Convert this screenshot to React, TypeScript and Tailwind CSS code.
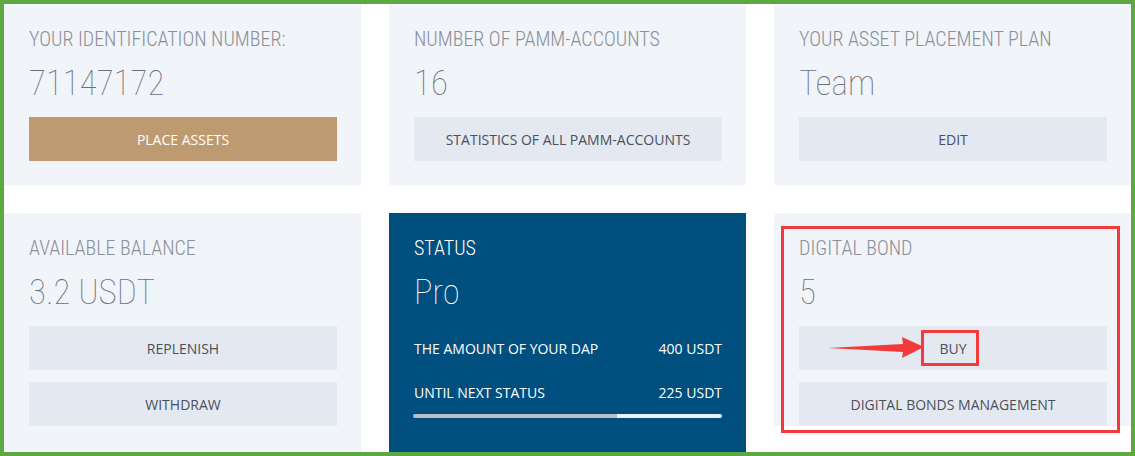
const head = { fontFamily: '"Roboto Condensed", Roboto, sans-serif' }
const body = { fontFamily: '"Open Sans", "Liberation Sans", sans-serif' }

const Btn = ({ children, gold }: { children: React.ReactNode; gold?: boolean }) => (
  <div
    style={body}
    className={
      gold
        ? 'h-11 w-full flex items-center justify-center bg-[#be9a70] text-white text-[14px] uppercase'
        : 'h-11 w-full flex items-center justify-center bg-[#e4e8f0] text-[#4b505b] text-[14px] uppercase'
    }
  >
    {children}
  </div>
)

const Card = ({ title, value, children }: { title: string; value: string; children: React.ReactNode }) => (
  <div className="bg-[#f1f4f8] pl-[25px] pr-6 pt-[21px] flex flex-col">
    <div style={head} className="text-[20px] leading-7 font-light uppercase text-[#8a8f9a]">{title}</div>
    <div style={head} className="text-[35px] leading-10 font-thin text-[#6a707c] mt-[11px]">{value}</div>
    <div className="mt-[13px] flex flex-col gap-3">{children}</div>
  </div>
)

const App = () => {
  return (
    <div className="w-[1135px] h-[456px] border-4 border-[#5ea843] bg-white overflow-hidden">
      <div className="grid grid-cols-3 grid-rows-[181px_239px] gap-7 h-full">
        <Card title="Your identification number:" value="71147172">
          <Btn gold>Place assets</Btn>
        </Card>
        <Card title="Number of PAMM-accounts" value="16">
          <Btn>Statistics of all PAMM-accounts</Btn>
        </Card>
        <Card title="Your asset placement plan" value="Team">
          <Btn>Edit</Btn>
        </Card>

        <Card title="Available balance" value="3.2 USDT">
          <Btn>Replenish</Btn>
          <Btn>Withdraw</Btn>
        </Card>

        <div className="bg-[#004f7e] pl-[25px] pr-6 pt-[21px] flex flex-col text-white">
          <div style={head} className="text-[20px] leading-7 font-light uppercase">Status</div>
          <div style={head} className="text-[35px] leading-10 font-thin mt-[11px]">Pro</div>
          <div style={body} className="mt-[13px] h-11 flex items-center justify-between text-[14px] uppercase">
            <span>The amount of your DAP</span>
            <span>400 USDT</span>
          </div>
          <div style={body} className="h-11 flex items-center justify-between text-[14px] uppercase">
            <span>Until next status</span>
            <span>225 USDT</span>
          </div>
          <div className="h-1 -ml-px flex rounded-full overflow-hidden">
            <div className="w-[66%] bg-[#b7bdc0]" />
            <div className="flex-1 bg-[#eef1f5]" />
          </div>
        </div>

        <div className="relative">
          <Card title="Digital bond" value="5">
            <Btn>Buy</Btn>
            <Btn>Digital bonds management</Btn>
          </Card>
          <div className="absolute left-[7px] top-[13px] w-[339px] h-[207px] border-[3px] border-[#f33a3a]" />
          <div className="absolute left-[147px] top-[117px] w-[58px] h-9 border-[3px] border-[#f33a3a]" />
          <svg className="absolute left-[54px] top-[123px]" width="96" height="24" viewBox="0 0 96 24">
            <polygon points="0,12 75,8 74,1 96,11 74,22 75,16" fill="#f33a3a" />
          </svg>
        </div>
      </div>
    </div>
  )
}

export default App
